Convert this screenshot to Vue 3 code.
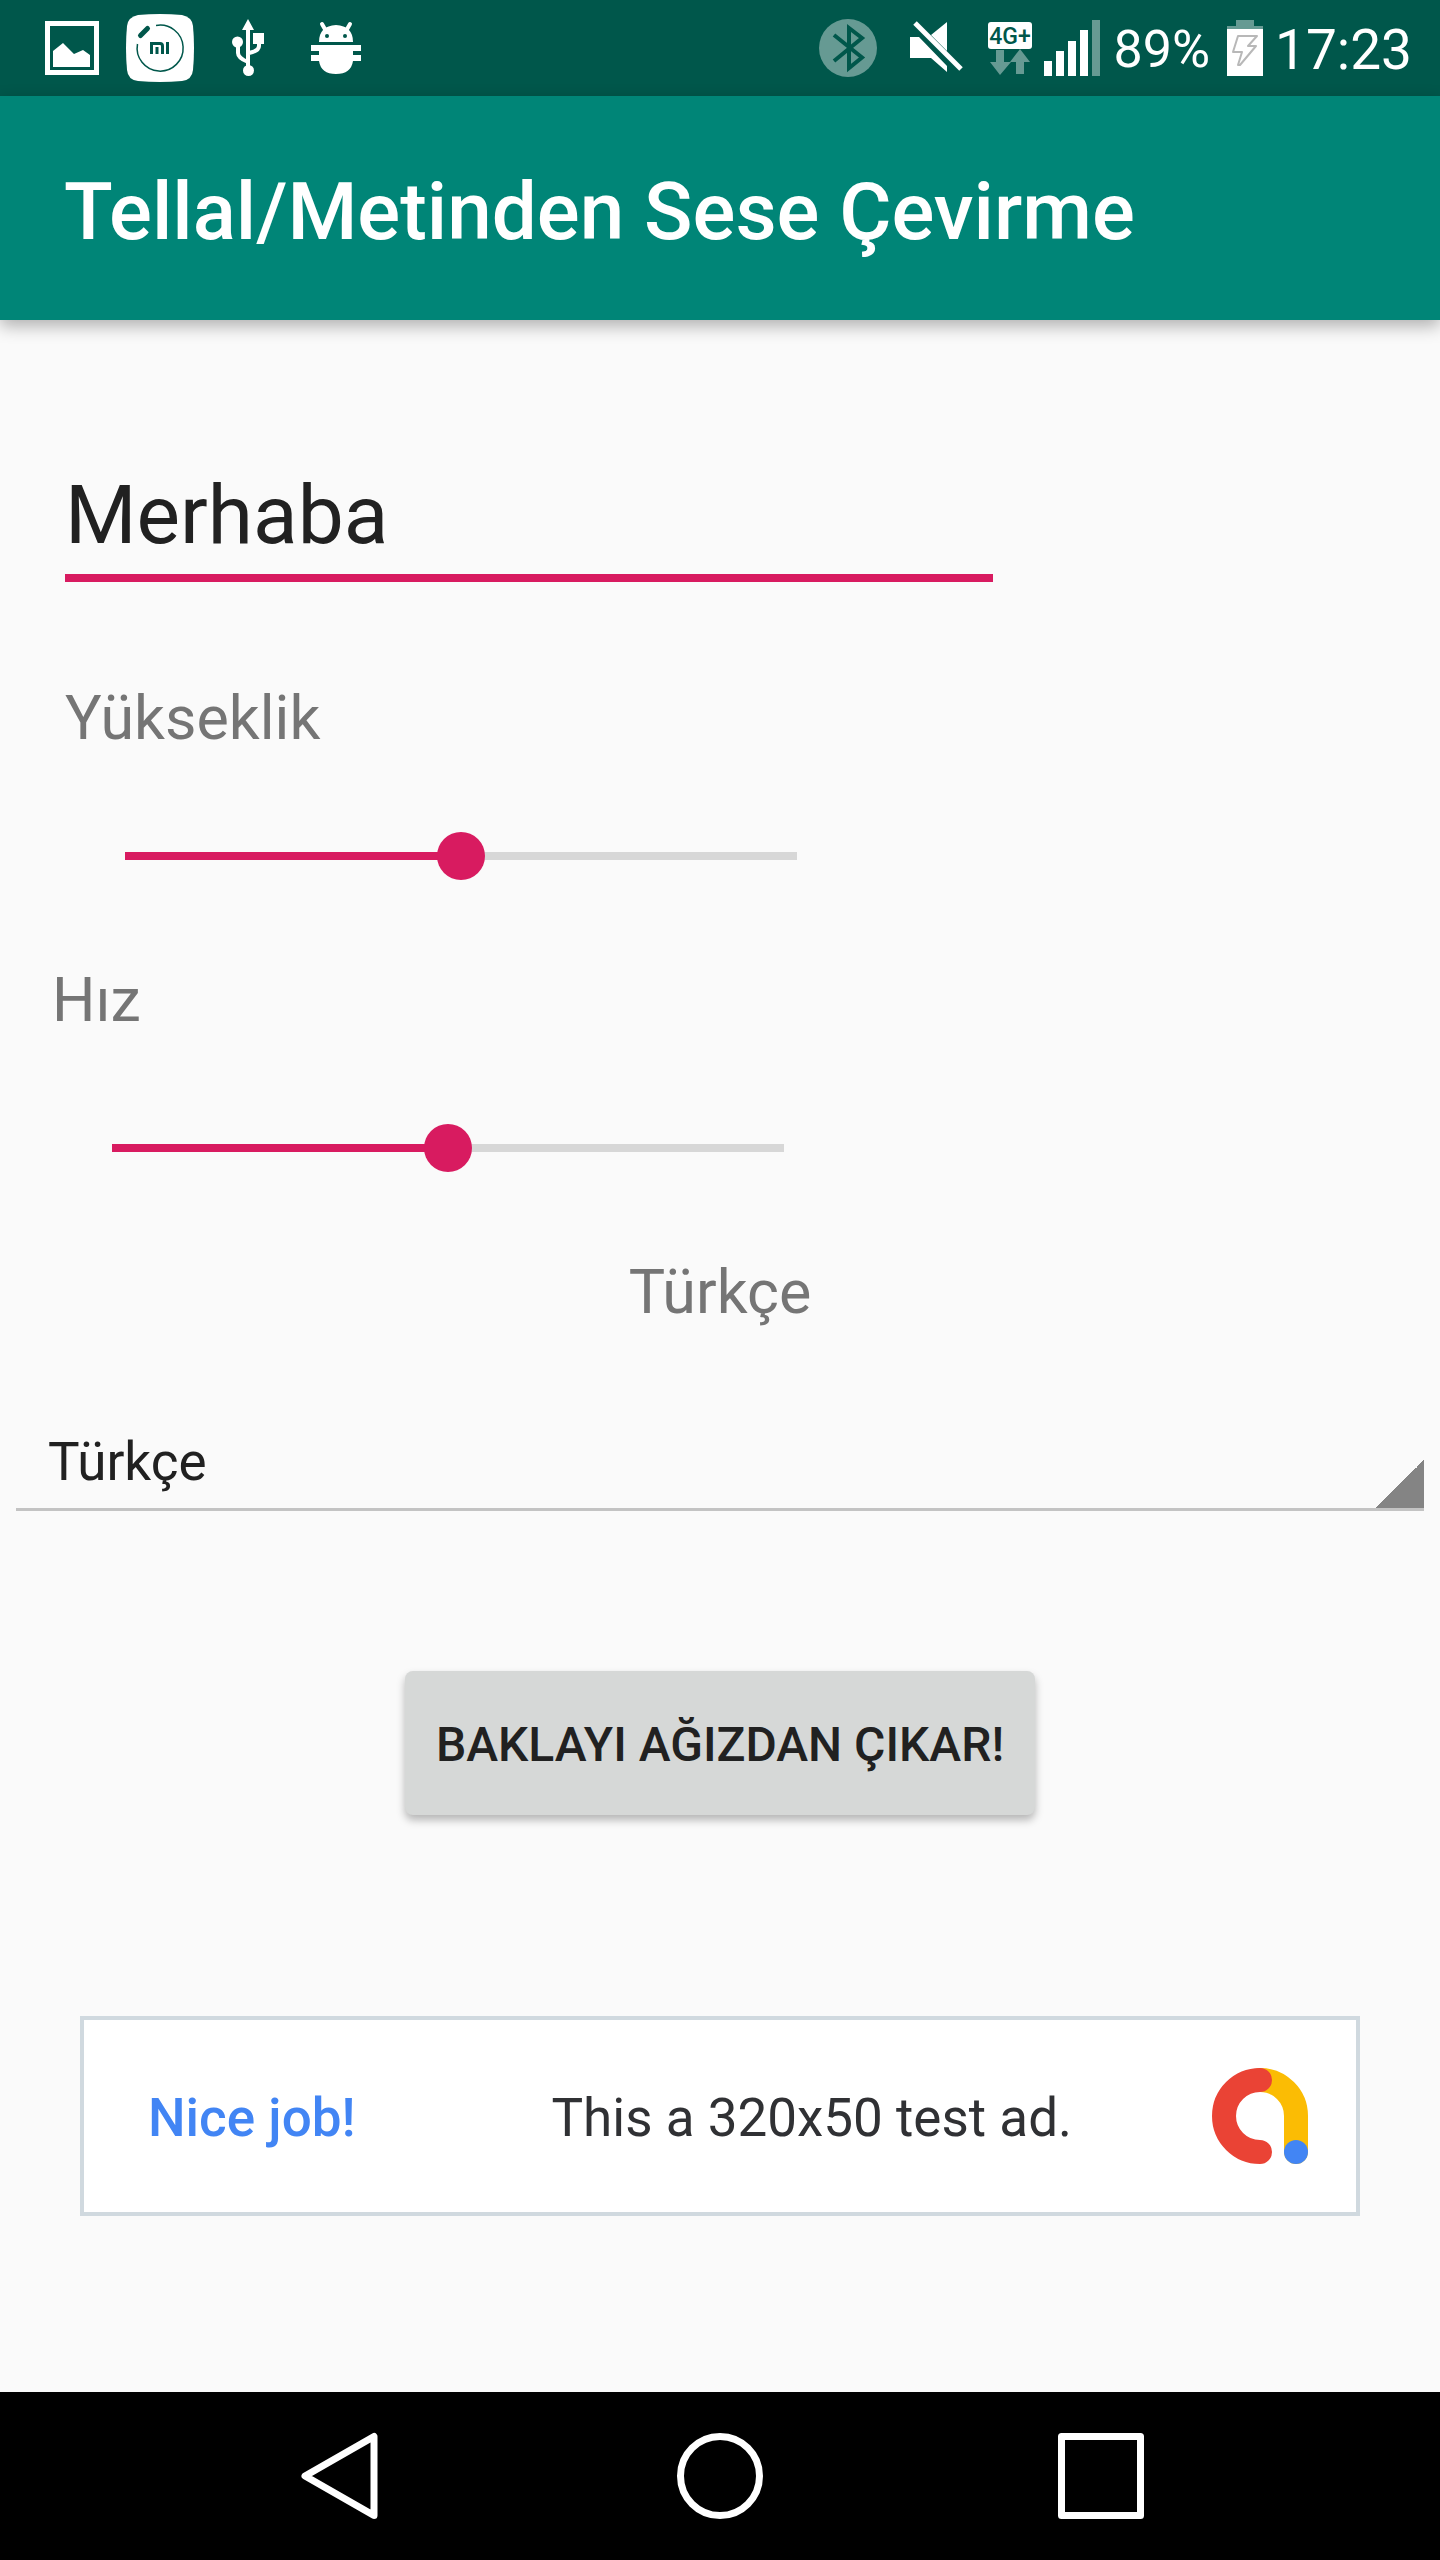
<script setup>
import { computed, ref } from 'vue'

const text = ref('Merhaba')
const pitch = ref(50)
const speed = ref(50)
const languages = ['Türkçe']
const language = ref(languages[0])

const pitchStyle = computed(() => ({ '--fill': pitch.value + '%' }))
const speedStyle = computed(() => ({ '--fill': speed.value + '%' }))
</script>

<template>
  <div class="screen">
    <header class="status-bar">
      <div class="notifications">
        <svg width="54" height="96" viewBox="0 0 54 96" aria-hidden="true">
          <path fill="#fff" fill-rule="evenodd" d="M0 21h54v54H0zM5 26v44h44V26z" />
          <path fill="#fff" d="M8 51l10-8 11 11 9-4 7 5v12H8z" />
        </svg>
        <svg width="68" height="96" viewBox="0 0 68 96" aria-hidden="true">
          <path fill="#fff" d="M12 15Q34 13 56 15Q66 17 67 26Q69 48 67 70Q66 80 56 81Q34 83 12 81Q2 80 1 70Q-1 48 1 26Q2 17 12 15z" />
          <g fill="none" stroke="#00574b">
            <path stroke-width="1.5" d="M30 25.5A23 23 0 1 1 11.500 44" />
            <path stroke-width="5" stroke-linecap="round" d="M14.500 35.500L21.500 28.500" />
            <path stroke-width="3" d="M25.500 54V43.500H34Q36.500 43.500 36.500 46V54M31 47V54M41.500 42V54" />
          </g>
        </svg>
        <svg width="54" height="96" viewBox="0 0 54 96" aria-hidden="true">
          <path fill="#fff" d="M27 19l6 11H21zM32 33h11v11H32z" />
          <circle cx="16.500" cy="42" r="5.500" fill="#fff" />
          <circle cx="27.500" cy="70.500" r="5.500" fill="#fff" />
          <path fill="none" stroke="#fff" stroke-width="4" d="M27 28V68M17 45V53Q17 58 27 62M38 42V46Q38 51 28 53" />
        </svg>
        <svg width="68" height="96" viewBox="0 0 68 96" aria-hidden="true">
          <path fill="#fff" d="M17 42Q17 26 34 25Q51 26 51 42z" />
          <path stroke="#fff" stroke-width="4" stroke-linecap="round" d="M20 24l4 7M48 24l-4 7" />
          <g fill="#00574b">
            <circle cx="25" cy="36" r="2" />
            <circle cx="43" cy="36" r="2" />
          </g>
          <path fill="#fff" d="M9 45H59V51H51V55H59V61H51Q49 74 34 74Q19 74 17 61H9V55H17V51H9z" />
        </svg>
      </div>
      <div class="system-icons">
        <svg width="58" height="96" viewBox="0 0 58 96" aria-hidden="true">
          <circle cx="29" cy="48" r="29" fill="#669a93" />
          <path fill="none" stroke="#00574b" stroke-width="4" d="M15 35L43 57.500L30 68V28L43 38L15 61" />
        </svg>
        <svg width="87" height="96" viewBox="0 0 87 96" aria-hidden="true">
          <path fill="#fff" d="M21 37h9l28 29v6L42 58H21zM42 35L58 22V51z" />
          <path stroke="#fff" stroke-width="5" d="M26 23L72 69" />
        </svg>
        <svg width="44" height="96" viewBox="0 0 44 96" role="img" aria-label="4G+">
          <rect y="22" width="44" height="27" rx="3" fill="#fff" />
          <text class="network" x="22" y="44" text-anchor="middle">4G+</text>
          <path fill="#669a93" d="M8 50h8v12h7L12 75 2 62h6zM28 74h8V62h6L32 49 22 62h6z" />
        </svg>
        <svg width="56" height="96" viewBox="0 0 56 96" aria-hidden="true">
          <path fill="#fff" d="M0 61h8v15H0zM12 51h8v25h-8zM24 41h8v35h-8zM36 30h8v46h-8z" />
          <path fill="#669a93" d="M48 20h8v56h-8z" />
        </svg>
        <span class="battery-level">89%</span>
        <svg width="36" height="96" viewBox="0 0 36 96" aria-hidden="true">
          <path fill="#669a93" d="M9 20h18v6h9v3H0v-3h9z" />
          <path fill="#fff" d="M0 29h36v47H0z" />
          <path fill="none" stroke="#b8b8b8" stroke-width="2" stroke-linejoin="round" d="M11 36H30L21 46H29L13 65H11L15 52H6z" />
        </svg>
        <span class="clock">17:23</span>
      </div>
    </header>

    <div class="app-bar">
      <h1>Tellal/Metinden Sese Çevirme</h1>
    </div>

    <main class="content">
      <input v-model="text" class="text-field" type="text" aria-label="Metin" />

      <div class="setting pitch">
        <label for="pitch">Yükseklik</label>
        <input id="pitch" v-model="pitch" type="range" :style="pitchStyle" />
      </div>

      <div class="setting speed">
        <label for="speed">Hız</label>
        <input id="speed" v-model="speed" type="range" :style="speedStyle" />
      </div>

      <label class="language-label" for="language">{{ language }}</label>
      <select id="language" v-model="language" class="spinner">
        <option v-for="item in languages" :key="item">{{ item }}</option>
      </select>

      <button class="speak" type="button">BAKLAYI AĞIZDAN ÇIKAR!</button>

      <aside class="ad">
        <strong>Nice job!</strong>
        <span>This a 320x50 test ad.</span>
        <svg width="96" height="96" viewBox="0 0 96 96" aria-hidden="true">
          <g fill="none" stroke-width="24" stroke-linecap="round">
            <path stroke="#fbbc04" d="M48 12A36 36 0 0 1 84 48V84" />
            <path stroke="#ea4335" d="M48 12A36 36 0 0 0 48 84" />
          </g>
          <circle cx="84" cy="84" r="12" fill="#4285f4" />
        </svg>
      </aside>
    </main>

    <nav class="nav-bar">
      <button type="button" aria-label="Geri">
        <svg width="88" height="88" viewBox="0 0 88 88" aria-hidden="true">
          <path d="M78 4.500V83.500L9 44z" />
        </svg>
      </button>
      <button type="button" aria-label="Ana ekran">
        <svg width="88" height="88" viewBox="0 0 88 88" aria-hidden="true">
          <circle cx="44" cy="44" r="39.500" />
        </svg>
      </button>
      <button type="button" aria-label="Son uygulamalar">
        <svg width="88" height="88" viewBox="0 0 88 88" aria-hidden="true">
          <rect x="5.500" y="4.500" width="79" height="79" />
        </svg>
      </button>
    </nav>
  </div>
</template>

<style>
body {
  margin: 0;
  background: #fafafa;
}
</style>

<style scoped>
.screen {
  display: flex;
  flex-direction: column;
  min-height: 100vh;
  background: #fafafa;
  color: #212121;
  font-family: Roboto, "Noto Sans", sans-serif;
}

button,
input,
select {
  box-sizing: border-box;
  margin: 0;
  border: 0;
  border-radius: 0;
  background: none;
  color: inherit;
  font-family: inherit;
}

svg {
  display: block;
  flex: none;
}

.status-bar {
  display: flex;
  justify-content: space-between;
  height: 96px;
  padding: 0 28px 0 45px;
  background: #00574b;
  color: #fff;
}

.notifications {
  display: flex;
  gap: 27px;
}

.system-icons {
  display: flex;
  gap: 12px;
  line-height: 100px;
}

.network {
  fill: #00574b;
  font-size: 23px;
  font-weight: 500;
}

.battery-level {
  margin: 0 5px 0 1px;
  font-size: 52px;
}

.clock {
  font-size: 55px;
}

.app-bar {
  position: relative;
  display: flex;
  align-items: center;
  box-sizing: border-box;
  height: 224px;
  padding: 8px 64px 0;
  background: #008577;
  box-shadow: 0 6px 16px rgba(0, 0, 0, 0.3);
  color: #fff;
}

h1 {
  margin: 0;
  font-size: 80px;
  font-weight: 500;
  line-height: 96px;
}

.content {
  display: flex;
  flex: 1;
  flex-direction: column;
  padding: 148px 0 100px;
}

.text-field {
  width: 928px;
  max-width: 100%;
  height: 114px;
  margin-left: 65px;
  padding: 0 0 12px;
  border-bottom: 8px solid #d81b60;
  font-size: 82px;
  outline: none;
}

.setting {
  display: flex;
  flex-direction: column;
}

.setting label,
.language-label {
  color: #757575;
  font-size: 61px;
  line-height: 72px;
}

.pitch {
  gap: 78px;
  margin: 100px 0 0 65px;
}

.speed {
  gap: 88px;
  margin: 84px 0 0 52px;
}

input[type="range"] {
  appearance: none;
  width: 672px;
  height: 48px;
  margin-left: 60px;
  background: linear-gradient(to right, #d81b60 var(--fill), #d7d7d7 var(--fill)) center / 100% 8px no-repeat;
}

input[type="range"]::-webkit-slider-thumb {
  appearance: none;
  width: 48px;
  height: 48px;
  border-radius: 50%;
  background: #d81b60;
}

.language-label {
  align-self: center;
  margin-top: 84px;
}

.spinner {
  appearance: none;
  height: 86px;
  margin: 97px 16px 0;
  padding: 0 64px 10px 32px;
  border-bottom: 3px solid #c3c3c3;
  background: linear-gradient(to bottom right, transparent 50%, #848484 50%) right bottom / 48px 48px no-repeat;
  font-size: 53px;
  line-height: 72px;
}

.speak {
  align-self: center;
  height: 144px;
  margin-top: 160px;
  padding: 2px 31px 0;
  border-radius: 8px;
  background: #d6d8d7;
  box-shadow: 0 5px 8px rgba(0, 0, 0, 0.28);
  font-size: 48px;
  font-weight: 500;
}

.ad {
  display: flex;
  align-items: center;
  box-sizing: border-box;
  height: 200px;
  margin: 201px 80px 0;
  padding: 0 48px 0 64px;
  border: 4px solid #d0d9df;
  background: #fff;
  color: #303134;
  font-size: 53px;
  line-height: 64px;
}

.ad strong,
.ad span {
  padding-top: 4px;
}

.ad strong {
  margin-right: auto;
  color: #4285f4;
  font-weight: 500;
}

.ad span {
  margin-right: 140px;
}

.nav-bar {
  display: flex;
  align-items: center;
  justify-content: center;
  gap: 292px;
  height: 168px;
  background: #000;
}

.nav-bar button {
  padding: 0;
}

.nav-bar svg {
  fill: none;
  stroke: #fff;
  stroke-width: 7;
  stroke-linejoin: round;
}
</style>
